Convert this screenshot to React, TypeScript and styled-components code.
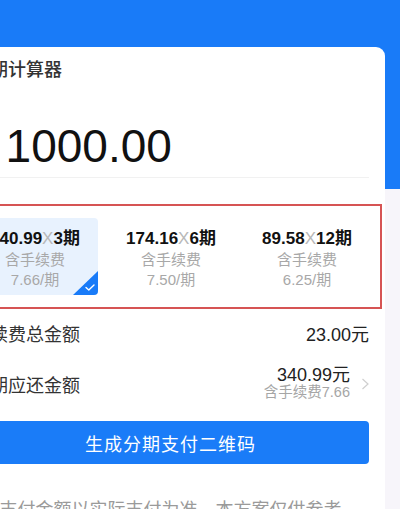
import React, { useState } from "react";
import styled, { createGlobalStyle } from "styled-components";

const GlobalStyle = createGlobalStyle`
  html, body {
    margin: 0;
    padding: 0;
  }
  body {
    width: 400px;
    height: 509px;
    overflow: hidden;
    background: linear-gradient(to bottom, #197bf8 0, #197bf8 189px, #f7f5fa 189px);
    font-family: "Liberation Sans", "Noto Sans CJK SC", sans-serif;
    color: #333;
  }
`;

const Card = styled.div`
  margin: 47px 15px 0 -44px;
  padding: 12px 16px 40px;
  background: #ffffff;
  border-top-right-radius: 9px;
`;

const Title = styled.h1`
  margin: 0;
  font-size: 18px;
  line-height: 22px;
  font-weight: 500;
  color: #333;
`;

const AmountRow = styled.div`
  display: flex;
  align-items: baseline;
  margin-top: 42px;
  padding-bottom: 8px;
  border-bottom: 1px solid #f1f1f1;
`;

const Currency = styled.span`
  font-size: 28px;
  margin-right: 18px;
  color: #111;
`;

const Amount = styled.span`
  font-size: 46px;
  line-height: 46px;
  color: #111;
`;

const PlanBox = styled.div`
  margin: 26px -13px 0 -12px;
  padding: 12px 10px;
  border: 2px solid #d65454;
  display: grid;
  grid-template-columns: repeat(3, 1fr);
  gap: 10px;
`;

const Plan = styled.div<{ $active: boolean }>`
  position: relative;
  overflow: hidden;
  padding: 9px 0 5px;
  border-radius: 4px;
  background: ${({ $active }) => ($active ? "#e8f2fe" : "transparent")};
  text-align: center;
  cursor: pointer;
`;

const PlanMain = styled.div`
  font-size: 17px;
  line-height: 23px;
  font-weight: 700;
  color: #111;
  white-space: nowrap;
`;

const Times = styled.span`
  font-weight: 400;
  color: #b8b8b8;
`;

const PlanSub = styled.div`
  font-size: 15px;
  line-height: 20px;
  color: #a8a8a8;
`;

const Corner = styled.div`
  position: absolute;
  right: 0;
  bottom: 0;
  width: 25px;
  height: 24px;
  background: #197bf8;
  clip-path: polygon(100% 0, 100% 100%, 0 100%);
  display: flex;
  align-items: flex-end;
  justify-content: flex-end;
  padding: 0 3px 4px 0;
  box-sizing: border-box;
`;

const Row = styled.div<{ $h: number }>`
  display: flex;
  align-items: center;
  justify-content: space-between;
  height: ${({ $h }) => $h}px;
`;

const Label = styled.span`
  font-size: 18px;
  color: #333;
`;

const Value = styled.span`
  font-size: 18px;
  color: #222;
`;

const ValueGroup = styled.div`
  display: flex;
  align-items: center;
  gap: 11px;
`;

const ValueStack = styled.div`
  display: flex;
  flex-direction: column;
  align-items: flex-end;
  line-height: 17px;
`;

const ValueSub = styled.span`
  font-size: 14.5px;
  color: #a6a6a6;
`;

const Chevron = styled.svg`
  width: 9px;
  height: 12px;
  margin-right: -1px;
`;

const Button = styled.button`
  display: block;
  width: 100%;
  height: 43px;
  margin-top: 10px;
  border: 0;
  border-radius: 4px;
  background: #1a7cf8;
  color: #fff;
  font-family: inherit;
  font-size: 18px;
  letter-spacing: 1px;
  cursor: pointer;
`;

const Note = styled.p`
  margin: 33px 0 0;
  text-align: center;
  font-size: 18px;
  line-height: 26px;
  color: #9a9a9a;
`;

const plans = [
  { each: "340.99", n: 3, fee: "7.66" },
  { each: "174.16", n: 6, fee: "7.50" },
  { each: "89.58", n: 12, fee: "6.25" },
];

export default function App() {
  const [active, setActive] = useState(0);

  return (
    <>
      <GlobalStyle />
      <Card>
        <Title>分期计算器</Title>
        <AmountRow>
          <Currency>¥</Currency>
          <Amount>1000.00</Amount>
        </AmountRow>

        <PlanBox>
          {plans.map((p, i) => (
            <Plan key={p.n} $active={i === active} onClick={() => setActive(i)}>
              <PlanMain>
                {p.each}
                <Times>X</Times>
                {p.n}期
              </PlanMain>
              <PlanSub>含手续费</PlanSub>
              <PlanSub>{p.fee}/期</PlanSub>
              {i === active && (
                <Corner>
                  <svg width="10" height="7" viewBox="0 0 10 7">
                    <path
                      d="M1 3.4 L3.8 6 L9 1"
                      fill="none"
                      stroke="#fff"
                      strokeWidth="1.4"
                      strokeLinecap="round"
                      strokeLinejoin="round"
                    />
                  </svg>
                </Corner>
              )}
            </Plan>
          ))}
        </PlanBox>

        <Row $h={48}>
          <Label>手续费总金额</Label>
          <Value>23.00元</Value>
        </Row>
        <Row $h={54}>
          <Label>每期应还金额</Label>
          <ValueGroup>
            <ValueStack>
              <Value>340.99元</Value>
              <ValueSub>含手续费7.66</ValueSub>
            </ValueStack>
            <Chevron viewBox="0 0 9 12">
              <path
                d="M1.5 1 L7 6 L1.5 11"
                fill="none"
                stroke="#cfcfcf"
                strokeWidth="1.2"
              />
            </Chevron>
          </ValueGroup>
        </Row>

        <Button>生成分期支付二维码</Button>
        <Note>支付金额以实际支付为准，本方案仅供参考</Note>
      </Card>
    </>
  );
}
